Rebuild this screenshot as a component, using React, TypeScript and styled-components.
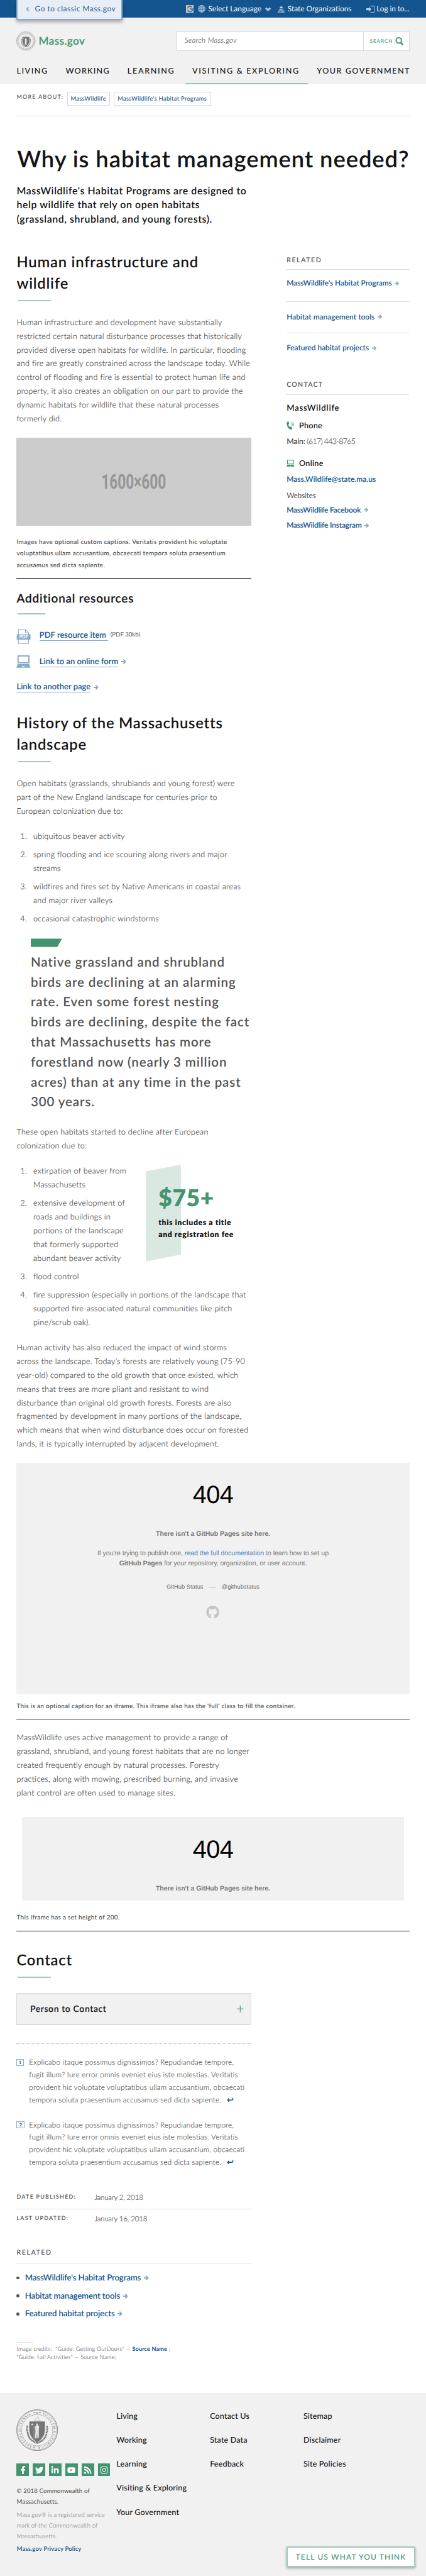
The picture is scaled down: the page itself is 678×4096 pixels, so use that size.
import React from 'react';
import styled, { createGlobalStyle, css } from 'styled-components';
import { FaFacebookF, FaGithub, FaInstagram, FaLinkedinIn, FaRss, FaTwitter, FaYoutube } from 'react-icons/fa';

/* ---------- design tokens ---------- */

const u = (n: number) => `${+(n * 0.66211).toFixed(3)}px`;

const c = {
  blue: '#14558f',
  blueSoft: '#89abcb',
  bluePale: '#cfdeea',
  green: '#43956f',
  greenSoft: '#a1cab7',
  ink: '#141414',
  text: '#535353',
  light: '#424242',
  line: '#dcdcdc',
  panel: '#f1f1f1',
};

/* size, line height, weight, tracking in thousandths of an em */
const type = (size: number, lh: number, weight: number, track = 0) => css`
  font-size: ${u(size)};
  line-height: ${u(lh)};
  font-weight: ${weight};
  letter-spacing: ${track / 1000}em;
`;

/* thickens the light and regular cuts by a hair */
const firm = (em: number) => css`
  -webkit-text-stroke: ${em}em currentColor;
`;

type Gap = { $mt?: number };
const gap = css<Gap>`
  margin-top: ${p => u(p.$mt ?? 0)};
`;

const GlobalStyle = createGlobalStyle`
  *, *::before, *::after { box-sizing: border-box; }
  body {
    margin: 0;
    background: #fff;
    color: ${c.text};
    font-family: Lato, "Open Sans", sans-serif;
    text-rendering: geometricPrecision;
  }
  h1, h2, h3, p, ol, ul, figure { margin: 0; padding: 0; }
  ol, ul { list-style: none; }
  a { color: inherit; text-decoration: none; }
  svg { display: block; flex: none; }
`;

const Page = styled.div`
  position: relative;
  display: flex;
  flex-direction: column;
  width: 678px;
  height: 4096px;
  overflow: hidden;
`;

/* ---------- header ---------- */

const TopBar = styled.div`
  display: flex;
  align-items: flex-start;
  height: ${u(43)};
  padding: 0 ${u(40)};
  background: ${c.blue};
  color: #fff;
`;

const ClassicTab = styled.a`
  position: relative;
  z-index: 1;
  display: flex;
  align-items: center;
  gap: ${u(13)};
  width: ${u(254)};
  height: ${u(49)};
  padding: 0 ${u(14)} ${u(3)} ${u(19)};
  background: #e8eef5;
  border: solid ${c.blueSoft};
  border-width: 0 2px 2px;
  box-shadow: 0 ${u(4)} ${u(8)} rgba(0, 0, 0, 0.3);
  color: ${c.blue};
  ${type(18, 43, 400, 42)}
  white-space: nowrap;
`;

const Utilities = styled.div`
  display: flex;
  margin-left: auto;
  height: 100%;
`;

const Utility = styled.a<{ $gap: number; $ml?: number; $track?: number }>`
  display: flex;
  align-items: center;
  gap: ${p => u(p.$gap)};
  margin-left: ${p => u(p.$ml ?? 0)};
  white-space: nowrap;
  ${type(18, 43, 400, 0)}
  letter-spacing: ${p => (p.$track ?? 0) / 1000}em;
`;

const Masthead = styled.header`
  display: flex;
  flex-direction: column;
  height: ${u(159)};
  padding: ${u(33)} ${u(40)} 0;
  background: ${c.panel};
`;

const BrandRow = styled.div`
  display: flex;
  justify-content: space-between;
  height: ${u(46)};
`;

const Brand = styled.a`
  display: flex;
  align-items: center;
  gap: ${u(7)};
  color: ${c.green};
  ${type(26, 46, 500, 22)}
  ${firm(0.014)}
`;

const SearchBox = styled.div`
  display: flex;
  width: ${u(560)};
  border: 1px solid ${c.line};
  background: #fff;
`;

const SearchField = styled.div`
  flex: 1;
  padding-left: ${u(18)};
  font-style: italic;
  ${type(17.5, 43, 300, 30)}
  ${firm(0.012)}
`;

const SearchButton = styled.div`
  display: flex;
  align-items: center;
  gap: ${u(5)};
  width: ${u(109)};
  padding-left: ${u(14)};
  border-left: 1px solid ${c.line};
  color: ${c.green};
  ${type(12, 43, 500, 130)}
`;

const MainNav = styled.nav`
  display: flex;
  justify-content: space-between;
  margin-top: ${u(37.2)};
  color: ${c.ink};
`;

const NavItem = styled.a<{ $active?: boolean; $track: number }>`
  position: relative;
  height: ${u(42.8)};
  ${type(19, 24, 500)}
  letter-spacing: ${p => p.$track / 1000}em;
  margin-right: -${p => p.$track / 1000}em;
  white-space: nowrap;
  ${p => p.$active && css`
    &::after {
      content: '';
      position: absolute;
      left: ${u(-17)};
      right: ${u(-20)};
      bottom: 0;
      height: 2px;
      background: #9bc5b0;
      transform: skewX(-18deg);
    }
  `}
`;

/* ---------- page head ---------- */

const Content = styled.main`
  padding: 0 ${u(40)};
`;

const MoreAbout = styled.div`
  display: flex;
  align-items: flex-start;
  height: ${u(77)};
  padding-top: ${u(19)};
  border-bottom: 1px solid ${c.line};
`;

const MoreLabel = styled.span`
  width: ${u(121)};
  margin-top: ${u(4)};
  ${type(13.5, 16, 500, 140)}
  white-space: nowrap;
`;

const Tag = styled.a<{ $w: number }>`
  width: ${p => u(p.$w)};
  height: ${u(32)};
  margin-right: ${u(9)};
  border: 1px solid ${c.bluePale};
  color: ${c.blue};
  text-align: center;
  ${type(14, 30, 500, 36)}
  white-space: nowrap;
`;

const Title = styled.h1`
  margin-top: ${u(69.2)};
  margin-left: ${u(1)};
  color: ${c.ink};
  ${type(55, 66, 600, 25)}
  white-space: nowrap;
`;

const Lead = styled.p`
  margin-top: ${u(28)};
  color: ${c.ink};
  ${type(24, 34.2, 600, 37)}
`;

const Columns = styled.div`
  display: grid;
  grid-template-columns: ${u(564)} ${u(295)};
  column-gap: ${u(85)};
`;

const Article = styled.article`
  white-space: nowrap;
`;

/* ---------- article parts ---------- */

const Rule = styled.span<{ $w: number; $mt: number }>`
  display: block;
  width: ${p => u(p.$w)};
  height: ${u(3)};
  margin: ${p => u(p.$mt)} 0 0 ${u(2)};
  background: ${c.greenSoft};
  transform: skewX(-20deg);
`;

const SectionTitle = styled.h2<Gap>`
  ${gap}
  color: ${c.ink};
  ${type(36, 52, 600, 32)}
`;

const SubTitle = styled.h3`
  margin-top: ${u(28)};
  color: ${c.ink};
  ${type(28.5, 40, 500, 46)}
  ${firm(0.018)}
`;

const Para = styled.p<Gap>`
  ${gap}
  color: ${c.light};
  ${type(19, 33, 300, 21)}
  ${firm(0.012)}
`;

const Placeholder = styled.div`
  display: flex;
  align-items: center;
  justify-content: center;
  height: ${u(212)};
  margin-top: ${u(29)};
  background: #ccc;
  color: #969696;
  font-family: Roboto, sans-serif;
  ${type(49, 212, 700)}
`;

const Narrow = styled.span`
  transform: scaleX(0.7);
`;

const Caption = styled.p<Gap>`
  ${gap}
  padding-bottom: ${u(16.8)};
  border-bottom: 1px solid ${c.ink};
  ${type(15, 28, 500, 36)}
  ${firm(0.008)}
`;

const Resource = styled.div<{ $mt: number; $h: number }>`
  display: flex;
  align-items: flex-start;
  height: ${p => u(p.$h)};
  margin-top: ${p => u(p.$mt)};
  color: ${c.blue};
  ${type(19.5, 24, 500, 4)}
  ${firm(0.014)}
`;

const Underlined = styled.a<Gap & { $ml?: number; $pr?: number }>`
  ${gap}
  margin-left: ${p => u(p.$ml ?? 0)};
  padding-right: ${p => u(p.$pr ?? 0)};
  height: ${u(26)};
  border-bottom: 1px solid ${c.blueSoft};
`;

const FileInfo = styled.span`
  margin: ${u(3.5)} 0 0 ${u(5)};
  color: ${c.text};
  ${type(14.5, 24, 400, 5)}
  ${firm(0)}
`;

const ArrowSlot = styled.span<Gap>`
  ${gap}
  display: inline-flex;
  margin-left: ${u(7)};
`;

const Steps = styled.ol<Gap>`
  ${gap}
  display: flow-root;
  counter-reset: step;
`;

const Step = styled.li`
  counter-increment: step;
  padding-left: ${u(40)};
  color: ${c.light};
  ${type(19, 33, 300, 21)}
  ${firm(0.012)}
  & + & { margin-top: ${u(11)}; }
  &::before {
    content: counter(step) '.';
    float: left;
    width: ${u(25)};
    margin-left: ${u(-40)};
    text-align: right;
  }
`;

const QuoteMark = styled.div`
  width: ${u(75)};
  height: ${u(20)};
  margin: ${u(31)} 0 0 ${u(34)};
  background: ${c.green};
  clip-path: polygon(0 0, 100% 0, 85% 100%, 0 100%);
`;

const Quote = styled.blockquote`
  margin: ${u(14)} 0 0 ${u(34)};
  ${type(31, 48, 600, 43)}
`;

const Stat = styled.aside`
  float: right;
  position: relative;
  width: ${u(254)};
  height: ${u(233)};
  margin-top: ${u(0.8)};
  padding: ${u(57)} 0 0 ${u(31)};
  color: ${c.ink};
  ${type(18.5, 29, 800, 50)}
  &::before {
    content: '';
    position: absolute;
    z-index: -1;
    inset: 0 auto 0 0;
    width: ${u(85)};
    background: #d9e9e1;
    clip-path: polygon(0 7%, 100% 0, 100% 92.7%, 0 100%);
  }
`;

const StatValue = styled.div`
  color: ${c.green};
  ${type(56, 46, 800, 18)}
  margin-bottom: ${u(21)};
`;

/* ---------- embedded 404 panel ---------- */

const Frame = styled.div<{ $mt: number; $ml?: number; $w: number; $h: number }>`
  display: flex;
  flex-direction: column;
  align-items: center;
  width: ${p => u(p.$w)};
  height: ${p => u(p.$h)};
  margin: ${p => u(p.$mt)} 0 0 ${p => u(p.$ml ?? 0)};
  padding-top: ${u(49)};
  overflow: hidden;
  background: ${c.panel};
  color: #787878;
  font-family: "Liberation Sans", Arial, sans-serif;
  text-align: center;
`;

const Code = styled.div`
  color: #000;
  text-shadow: 0 1px 0 #fff;
  ${type(60, 60, 400, -17)}
`;

const FrameLead = styled.div`
  margin-top: ${u(52)};
  ${type(16, 24, 700, -4)}
`;

const FrameText = styled.div`
  margin-top: ${u(21)};
  ${type(16, 24.6, 400, -5)}
  a { color: #4183c4; }
`;

const StatusLinks = styled.div`
  display: flex;
  align-items: center;
  gap: ${u(14)};
  margin: ${u(34.5)} 0 ${u(33.5)};
  color: #666;
  ${type(14, 20, 400, 8)}
  i { width: ${u(16)}; border-top: 1px solid #ccc; }
`;

const WideCaption = styled(Caption)`
  width: ${u(944)};
  letter-spacing: 0.033em;
`;

/* ---------- contact, footnotes, dates ---------- */

const Accordion = styled.div`
  display: flex;
  align-items: center;
  justify-content: space-between;
  height: ${u(77)};
  margin-top: ${u(36.3)};
  padding: 0 ${u(17)} 0 ${u(31)};
  background: ${c.panel};
  border: 1px solid ${c.line};
  border-block-width: 2px;
  color: ${c.ink};
  ${type(21, 24, 500, 47)}
  ${firm(0.014)}
`;

const Footnotes = styled.div`
  margin-top: ${u(45)};
  border-top: 1px dotted #b8b8b8;
`;

const Footnote = styled.div`
  display: flex;
  margin-top: ${u(30)};
  color: ${c.light};
  ${type(17.5, 30, 300, 22)}
  ${firm(0.01)}
`;

const NoteMark = styled.a<{ $w: number }>`
  width: ${p => u(p.$w)};
  height: ${u(17)};
  margin: ${u(5.4)} ${p => u(30 - p.$w)} 0 0;
  border: 1px solid ${c.blueSoft};
  color: ${c.blue};
  text-align: center;
  ${type(11, 14, 600)}
`;

const BackLink = styled.a`
  display: inline-block;
  margin-left: ${u(8)};
`;

const DateRow = styled.div<{ $mt?: number; $pt?: number; $line?: boolean }>`
  display: flex;
  align-items: flex-start;
  margin-top: ${p => u(p.$mt ?? 0)};
  padding-top: ${p => u(p.$pt ?? 0)};
  ${p => p.$line && css`height: ${u(38.6)}; border-bottom: 1px solid ${c.line};`}
`;

const DateLabel = styled.span`
  width: ${u(187)};
  padding-top: ${u(1.2)};
  ${type(13.5, 16, 600, 141)}
`;

const DateValue = styled.span`
  color: ${c.light};
  ${type(17.5, 24, 300, -18)}
  ${firm(0.01)}
`;

const ListHeading = styled.h3<{ $mt: number; $pb: number; $track?: number }>`
  margin-top: ${p => u(p.$mt)};
  padding-bottom: ${p => u(p.$pb)};
  border-bottom: 1px solid ${c.line};
  ${type(16, 20, 500)}
  letter-spacing: ${p => (p.$track ?? 150) / 1000}em;
  ${firm(0.01)}
`;

const Bullets = styled.ul`
  margin-top: ${u(23.3)};
`;

const Bullet = styled.li`
  display: flex;
  align-items: center;
  color: ${c.blue};
  ${type(20, 24, 600, -11)}
  & + & { margin-top: ${u(19.3)}; }
  &::before {
    content: '';
    width: ${u(7)};
    height: ${u(7)};
    margin-right: ${u(13)};
    border-radius: 50%;
    background: ${c.text};
  }
`;

const Credits = styled.div`
  margin-top: ${u(55)};
  padding-bottom: ${u(76.2)};
  color: #585858;
  ${type(13.5, 20, 300, 28)}
  ${firm(0.01)}
  &::before {
    content: '';
    display: block;
    width: ${u(40)};
    margin-bottom: ${u(4.8)};
    border-top: 1px solid ${c.line};
  }
  b { color: ${c.blue}; font-weight: 700; }
`;

const CreditLine = styled.div`
  white-space: pre;
`;

/* ---------- sidebar ---------- */

const Sidebar = styled.aside`
  white-space: nowrap;
`;

const SideLink = styled.a<{ $mt?: number; $pt?: number; $pb?: number; $track?: number; $weight?: number }>`
  display: flex;
  align-items: center;
  margin-top: ${p => u(p.$mt ?? 0)};
  padding-top: ${p => u(p.$pt ?? 0)};
  padding-bottom: ${p => u(p.$pb ?? 0)};
  border-bottom: ${p => (p.$pb ? `1px solid ${c.line}` : '0')};
  color: ${c.blue};
  ${type(18, 22, 600)}
  font-weight: ${p => p.$weight ?? 600};
  letter-spacing: ${p => (p.$track ?? -7) / 1000}em;
  ${p => p.$weight && firm(0.014)}
`;

const OrgName = styled.div`
  margin-top: ${u(19.8)};
  color: ${c.ink};
  ${type(20, 24, 600, 55)}
`;

const ContactKind = styled.div<Gap>`
  ${gap}
  display: flex;
  align-items: center;
  gap: ${u(11)};
  color: ${c.ink};
  ${type(19, 24, 600, 22)}
`;

const PhoneLine = styled.div`
  margin-top: ${u(13.2)};
  color: ${c.light};
  ${type(18.5, 24, 300, -48)}
  ${firm(0.01)}
  span { font-weight: 400; letter-spacing: -0.01em; }
`;

const SideNote = styled.div`
  margin-top: ${u(18)};
  ${type(18, 22, 400, -22)}
`;

/* ---------- footer ---------- */

const Footer = styled.footer`
  flex: 1;
  display: flex;
  padding: 0 ${u(40)};
  background: ${c.panel};
  white-space: nowrap;
`;

const FooterBrand = styled.div`
  width: ${u(240)};
  padding-top: ${u(40)};
`;

const SocialRow = styled.div`
  display: flex;
  gap: ${u(9)};
  margin-top: ${u(30)};
`;

const SocialButton = styled.a`
  display: flex;
  align-items: center;
  justify-content: center;
  width: ${u(30)};
  height: ${u(30)};
  background: ${c.green};
  color: #fff;
  font-size: ${u(20)};
`;

const Legal = styled.p<{ $mt: number; $weight: number; $color: string; $track: number }>`
  margin-top: ${p => u(p.$mt)};
  color: ${p => p.$color};
  ${type(14.5, 26, 400)}
  font-weight: ${p => p.$weight};
  letter-spacing: ${p => p.$track / 1000}em;
`;

const FooterLinks = styled.div`
  display: flex;
  flex-direction: column;
  gap: ${u(33.8)};
  width: ${u(224.7)};
  padding-top: ${u(43.6)};
  color: ${c.ink};
  ${type(19, 24, 500, 12)}
`;

const FeedbackButton = styled.a`
  position: absolute;
  right: ${u(25)};
  bottom: ${u(21)};
  width: ${u(311)};
  height: ${u(50)};
  border: 2px solid ${c.greenSoft};
  background: #fff;
  box-shadow: 0 ${u(3)} ${u(6)} rgba(0, 0, 0, 0.3);
  color: ${c.green};
  text-align: center;
  white-space: nowrap;
  ${type(18, 44.5, 500, 100)}
`;

/* ---------- icons ---------- */

const px = (n: number) => n * 0.66211;

const Arrow = ({ size = 11 }: { size?: number }) => (
  <svg width={px(size)} height={px(size)} viewBox="0 0 12 12" fill="none" stroke={c.blueSoft} strokeWidth="2.8">
    <path d="M0 6h9M5 1l5 5-5 5" />
  </svg>
);

const GoogleG = () => (
  <svg width={px(19)} height={px(19)} viewBox="0 0 19 19" fill="none" strokeWidth="3.2">
    <rect width="19" height="19" fill="#b9cce0" />
    <path d="M4 6.2A6.6 6.6 0 0 1 14.2 4.9" stroke="#b5435a" />
    <path d="M3.8 12.6A6.6 6.6 0 0 1 4 6.2" stroke="#d9b03c" />
    <path d="M14 14.3A6.6 6.6 0 0 1 3.8 12.6" stroke="#3f9a6a" />
    <path d="M9.6 9.7h6.3A6.6 6.6 0 0 1 14 14.3" stroke="#4079cf" />
  </svg>
);

const Globe = () => (
  <svg width={px(18)} height={px(18)} viewBox="0 0 18 18" fill="none" stroke="#b9cce0" strokeWidth="1.4">
    <circle cx="9" cy="9" r="8.2" />
    <ellipse cx="9" cy="9" rx="4.2" ry="8.2" />
    <path d="M9 1v16M1 9h16M2 5h14M2 13h14" />
  </svg>
);

const ChevronDown = () => (
  <svg width={px(14)} height={px(11)} viewBox="0 0 14 11" fill="none" stroke="#b9cce0" strokeWidth="4">
    <path d="M1.5 2.3 7 7.8l5.5-5.5" />
  </svg>
);

const StateHouse = () => (
  <svg width={px(17)} height={px(17)} viewBox="0 0 17 17" fill="#b9cce0">
    <path d="M8 0h1v2c2 .5 3.500 2 3.500 4h-8c0-2 1.500-3.500 3.500-4zM4 7h9v2H4z" />
    <path d="M3 9.700h2v2H3zM6 9.700h2v2H6zM9 9.700h2v2H9zM12 9.700h2v2h-2z" />
    <path d="M1 12h15v1H1zM1 13h1.500v2.500H1zM4.300 13h1.500v2.500H4.300zM7.700 13h1.500v2.500H7.700zM11 13h1.500v2.500H11zM14.500 13H16v2.500h-1.500zM0 15.500h17V17H0z" />
  </svg>
);

const Login = () => (
  <svg width={px(20)} height={px(17)} viewBox="0 0 20 17">
    <path d="M0 6h6V2.500l6.500 6-6.500 6V11H0z" fill="#b9cce0" />
    <path d="M10 1h9v15h-9" fill="none" stroke="#b9cce0" strokeWidth="1.600" />
  </svg>
);

const ChevronLeft = () => (
  <svg width={px(9)} height={px(11)} viewBox="0 0 9 11" fill="none" stroke={c.blueSoft} strokeWidth="3.400">
    <path d="M7 1 2.500 5.500 7 10" />
  </svg>
);

const SearchIcon = () => (
  <svg width={px(20)} height={px(20)} viewBox="0 0 20 20" fill="none" stroke={c.green}>
    <circle cx="8.500" cy="8" r="6.500" strokeWidth="3" />
    <path d="m13 13 6 6" strokeWidth="4" />
  </svg>
);

const PdfIcon = () => (
  <svg width={px(34)} height={px(36)} viewBox="0 0 34 36">
    <path d="M5 1h17l7.500 8v26H5zM22 1v8.500h7.500" fill="#fff" stroke={c.blueSoft} strokeWidth="1.600" />
    <rect x="1" y="13" width="33" height="13" fill={c.blueSoft} />
    <text x="17.500" y="23.400" textAnchor="middle" fontFamily="Lato" fontSize="11" fontWeight="900" fill="#fff" style={{ WebkitTextStroke: 0 }}>PDF</text>
  </svg>
);

const Laptop = ({ w, h, color }: { w: number; h: number; color: string }) => (
  <svg width={px(w)} height={px(h)} viewBox="0 0 34 30" preserveAspectRatio="none">
    <rect x="4.200" y="1.500" width="26" height="16.500" fill="none" stroke={color} strokeWidth="3" />
    <path d="M3 21h28l3 9H0z" fill={color} />
    <rect x="14" y="26" width="6" height="2" fill="#fff" />
  </svg>
);

const PhoneIcon = () => (
  <svg width={px(19)} height={px(20)} viewBox="0 0 19 20">
    <path d="M1 2C2 .5 4 0 5 .5L6.500 5 4.500 7c.5 2.500 2 5 4 6.500l2.500-1 3 4c0 1.500-2 3-4 3.300C4 18.500-1 9 1 2z" fill={c.green} />
    <path d="M11 7c1 .5 1.600 1.500 1.600 3M11.500 4c2 .8 3.500 3 3.500 6M12 1.200c3.500 1.200 5.800 4.500 5.800 8.800" fill="none" stroke={c.green} strokeWidth="1.300" />
  </svg>
);

const ReturnArrow = () => (
  <svg width={px(16)} height={px(12)} viewBox="0 0 16 12" fill="none" stroke={c.blue} strokeWidth="2.300">
    <path d="M5.500 2.500 2 6.500l3.500 4M2 6.500h10q2.500 0 2.500-2.500V1" />
  </svg>
);

const Plus = () => (
  <svg width={px(16)} height={px(16)} viewBox="0 0 16 16" stroke={c.green} strokeWidth="1.700">
    <path d="M8 0v16M0 8h16" />
  </svg>
);

const Seal = ({ size, lettered }: { size: number; lettered?: boolean }) => (
  <svg width={px(size)} height={px(size)} viewBox="0 0 100 100" fill="none" stroke="#757575">
    <circle cx="50" cy="50" r="49.200" strokeWidth="1.200" />
    <circle cx="50" cy="50" r="47.200" strokeWidth="0.700" />
    <circle cx="50" cy="50" r="37.500" strokeWidth="1.300" strokeDasharray="1.300 1" />
    {lettered ? (
      <>
        <path id="seal-ring" d="M50 10.500a39.500 39.500 0 1 1-.01 0" stroke="none" />
        <text fontFamily="Liberation Serif" fontSize="8" fill="#757575" stroke="none">
          <textPath href="#seal-ring" startOffset="13" textLength="222">SIGILLUM REIPUBLICÆ MASSACHUSETTENSIS.</textPath>
        </text>
        <path d="M41 8.500h5m8 0h5" strokeWidth="1.500" />
        <circle cx="50" cy="8.500" r="2" />
      </>
    ) : (
      <circle cx="50" cy="50" r="42.300" strokeWidth="5" strokeDasharray="3 2.500" opacity="0.55" />
    )}
    <path d="M27 39c-3 9 0 14 1 21 2 9 9 17 22 21 13-4 20-12 22-21 1-7 4-12 1-21" strokeWidth="4" strokeDasharray="3 .8" />
    <path d="M43 26c4-3 6-9 9-8 3 2-1 3 5 7M43 27h16" strokeWidth="1" opacity="0.6" />
    <path d="M31.500 29h37c1 17 1 28-4 36-4 7-9 11-14.500 14-5.500-3-10.500-7-14.500-14-5-8-5-19-4-36z" fill="#757575" stroke="none" />
    <path d="m38 33 .9 2 2.200.2-1.700 1.400.6 2.200-2-1.200-2 1.200.6-2.200-1.700-1.400 2.200-.2z" fill="#f1f1f1" stroke="none" />
    <path d="M48 34h4v4l3 3-1 9v19h-3.500l-.5-12-1.500 13H45l1-19-1-9 3-4z" fill="#e4e4e4" stroke="none" />
    <path d="M42.500 39v30" stroke="#d0d0d0" strokeWidth="0.900" />
  </svg>
);

/* ---------- composed pieces ---------- */

const Link = ({ children, ...rest }: React.ComponentProps<typeof SideLink>) => (
  <SideLink {...rest}>{children}<ArrowSlot><Arrow /></ArrowSlot></SideLink>
);

const relatedLinks = ["MassWildlife's Habitat Programs", 'Habitat management tools', 'Featured habitat projects'];

const footerColumns = [
  ['Living', 'Working', 'Learning', 'Visiting & Exploring', 'Your Government'],
  ['Contact Us', 'State Data', 'Feedback'],
  ['Sitemap', 'Disclaimer', 'Site Policies'],
];

const socials = [FaFacebookF, FaTwitter, FaLinkedinIn, FaYoutube, FaRss, FaInstagram];

const NotFound = () => (
  <>
    <Code>404</Code>
    <FrameLead>There isn't a GitHub Pages site here.</FrameLead>
  </>
);

const NoteText = () => (
  <span>
    Explicabo itaque possimus dignissimos? Repudiandae tempore,<br />
    fugit illum? Iure error omnis eveniet eius iste molestias. Veritatis<br />
    provident hic voluptate voluptatibus ullam accusantium, obcaecati<br />
    tempora soluta praesentium accusamus sed dicta sapiente. <BackLink><ReturnArrow /></BackLink>
  </span>
);

export default function App() {
  return (
    <Page>
      <GlobalStyle />
      <TopBar>
        <ClassicTab><ChevronLeft />Go to classic Mass.gov</ClassicTab>
        <Utilities>
          <Utility $gap={10}><GoogleG /><Globe /></Utility>
          <Utility $gap={9} $ml={7}>Select Language <ChevronDown /></Utility>
          <Utility $gap={7} $ml={16} $track={-1}><StateHouse />State Organizations</Utility>
          <Utility $gap={5} $ml={35} $track={-9}><Login />Log in to...</Utility>
        </Utilities>
      </TopBar>
      <Masthead>
        <BrandRow>
          <Brand><Seal size={46} />Mass.gov</Brand>
          <SearchBox>
            <SearchField>Search Mass.gov</SearchField>
            <SearchButton>SEARCH<SearchIcon /></SearchButton>
          </SearchBox>
        </BrandRow>
        <MainNav>
          <NavItem $track={123}>LIVING</NavItem>
          <NavItem $track={98}>WORKING</NavItem>
          <NavItem $track={133}>LEARNING</NavItem>
          <NavItem $track={133} $active>VISITING &amp; EXPLORING</NavItem>
          <NavItem $track={118}>YOUR GOVERNMENT</NavItem>
        </MainNav>
      </Masthead>

      <Content>
        <MoreAbout>
          <MoreLabel>MORE ABOUT:</MoreLabel>
          <Tag $w={103}>MassWildlife</Tag>
          <Tag $w={234}>MassWildlife's Habitat Programs</Tag>
        </MoreAbout>
        <Title>Why is habitat management needed?</Title>
        <Lead>
          MassWildlife's Habitat Programs are designed to<br />
          help wildlife that rely on open habitats<br />
          (grassland, shrubland, and young forests).
        </Lead>

        <Columns>
          <Article>
            <SectionTitle $mt={59.3}>Human infrastructure and<br />wildlife</SectionTitle>
            <Rule $w={80} $mt={13} />
            <Para $mt={34}>
              Human infrastructure and development have substantially<br />
              restricted certain natural disturbance processes that historically<br />
              provided diverse open habitats for wildlife. In particular, flooding<br />
              and fire are greatly constrained across the landscape today. While<br />
              control of flooding and fire is essential to protect human life and<br />
              property, it also creates an obligation on our part to provide the<br />
              dynamic habitats for wildlife that these natural processes<br />
              formerly did.
            </Para>
            <Placeholder><Narrow>1600×600</Narrow></Placeholder>
            <Caption $mt={25}>
              Images have optional custom captions. Veritatis provident hic voluptate<br />
              voluptatibus ullam accusantium, obcaecati tempora soluta praesentium<br />
              accusamus sed dicta sapiente.
            </Caption>

            <SubTitle>Additional resources</SubTitle>
            <Rule $w={66} $mt={14} />
            <Resource $mt={35} $h={36}>
              <PdfIcon />
              <Underlined $mt={3.5} $ml={21} $pr={5}>PDF resource item</Underlined>
              <FileInfo>(PDF 30kb)</FileInfo>
            </Resource>
            <Resource $mt={28} $h={30}>
              <Laptop w={34} h={30} color={c.blueSoft} />
              <Underlined $mt={2.5} $ml={21}>Link to an online form</Underlined>
              <ArrowSlot $mt={9}><Arrow size={12} /></ArrowSlot>
            </Resource>
            <Resource $mt={33.5} $h={26}>
              <Underlined>Link to another page</Underlined>
              <ArrowSlot $mt={7}><Arrow size={12} /></ArrowSlot>
            </Resource>

            <SectionTitle $mt={47.6}>History of the Massachusetts<br />landscape</SectionTitle>
            <Rule $w={80} $mt={13} />
            <Para $mt={34}>
              Open habitats (grasslands, shrublands and young forest) were<br />
              part of the New England landscape for centuries prior to<br />
              European colonization due to:
            </Para>
            <Steps $mt={28}>
              <Step>ubiquitous beaver activity</Step>
              <Step>spring flooding and ice scouring along rivers and major<br />streams</Step>
              <Step>wildfires and fires set by Native Americans in coastal areas<br />and major river valleys</Step>
              <Step>occasional catastrophic windstorms</Step>
            </Steps>
            <QuoteMark />
            <Quote>
              Native grassland and shrubland<br />
              birds are declining at an alarming<br />
              rate. Even some forest nesting<br />
              birds are declining, despite the fact<br />
              that Massachusetts has more<br />
              forestland now (nearly 3 million<br />
              acres) than at any time in the past<br />
              300 years.
            </Quote>
            <Para $mt={30}>
              These open habitats started to decline after European<br />
              colonization due to:
            </Para>
            <Steps $mt={28}>
              <Stat>
                <StatValue>$75+</StatValue>
                this includes a title<br />and registration fee
              </Stat>
              <Step>extirpation of beaver from<br />Massachusetts</Step>
              <Step>extensive development of<br />roads and buildings in<br />portions of the landscape<br />that formerly supported<br />abundant beaver activity</Step>
              <Step>flood control</Step>
              <Step>fire suppression (especially in portions of the landscape that<br />supported fire-associated natural communities like pitch<br />pine/scrub oak).</Step>
            </Steps>
            <Para $mt={28.5}>
              Human activity has also reduced the impact of wind storms<br />
              across the landscape. Today’s forests are relatively young (75-90<br />
              year-old) compared to the old growth that once existed, which<br />
              means that trees are more pliant and resistant to wind<br />
              disturbance than original old growth forests. Forests are also<br />
              fragmented by development in many portions of the landscape,<br />
              which means that when wind disturbance does occur on forested<br />
              lands, it is typically interrupted by adjacent development.
            </Para>

            <Frame $mt={28.3} $w={944} $h={556}>
              <NotFound />
              <FrameText>
                If you're trying to publish one, <a>read the full documentation</a> to learn how to set up<br />
                <b>GitHub Pages</b> for your repository, organization, or user account.
              </FrameText>
              <StatusLinks><span>GitHub Status</span><i /><span>@githubstatus</span></StatusLinks>
              <FaGithub size={px(32)} color="#c3c4c4" />
            </Frame>
            <WideCaption $mt={15}>
              This is an optional caption for an iframe. This iframe also has the 'full' class to fill the container.
            </WideCaption>

            <Para $mt={27}>
              MassWildlife uses active management to provide a range of<br />
              grassland, shrubland, and young forest habitats that are no longer<br />
              created frequently enough by natural processes. Forestry<br />
              practices, along with mowing, prescribed burning, and invasive<br />
              plant control are often used to manage sites.
            </Para>
            <Frame $mt={41.8} $ml={13} $w={918} $h={200}><NotFound /></Frame>
            <WideCaption $mt={28}>This iframe has a set height of 200.</WideCaption>

            <SectionTitle $mt={43.7}>Contact</SectionTitle>
            <Rule $w={80} $mt={13} />
            <Accordion>Person to Contact<Plus /></Accordion>

            <Footnotes>
              <Footnote><NoteMark $w={17}>1</NoteMark><NoteText /></Footnote>
              <Footnote><NoteMark $w={19}>2</NoteMark><NoteText /></Footnote>
            </Footnotes>

            <DateRow $mt={58} $line><DateLabel>DATE PUBLISHED:</DateLabel><DateValue>January 2, 2018</DateValue></DateRow>
            <DateRow $pt={12}><DateLabel>LAST UPDATED:</DateLabel><DateValue>January 16, 2018</DateValue></DateRow>

            <ListHeading $mt={59.6} $pb={12.2}>RELATED</ListHeading>
            <Bullets>
              {relatedLinks.map(t => <Bullet key={t}>{t}<ArrowSlot><Arrow size={12} /></ArrowSlot></Bullet>)}
            </Bullets>
            <Credits>
              <CreditLine>{'Image credits:  "Guide: Getting OutDoors" — '}<b>Source Name</b>{' ;'}</CreditLine>
              <CreditLine>{'"Guide: Fall Activities" — Source Name;'}</CreditLine>
            </Credits>
          </Article>

          <Sidebar>
            <ListHeading $mt={71.5} $pb={10.7}>RELATED</ListHeading>
            <Link $mt={21} $pb={32}>{relatedLinks[0]}</Link>
            <Link $pt={25} $pb={27} $track={3}>{relatedLinks[1]}</Link>
            <Link $pt={25} $track={-3}>{relatedLinks[2]}</Link>
            <ListHeading $mt={67.8} $pb={11.2} $track={118}>CONTACT</ListHeading>
            <OrgName>MassWildlife</OrgName>
            <ContactKind $mt={18.8}><PhoneIcon />Phone</ContactKind>
            <PhoneLine><span>Main:</span> (617) 443-8765</PhoneLine>
            <ContactKind $mt={28.8}><Laptop w={19} h={17} color={c.green} />Online</ContactKind>
            <SideLink $mt={15.4} $weight={500} $track={9}>Mass.Wildlife@state.ma.us</SideLink>
            <SideNote>Websites</SideNote>
            <Link $mt={12} $weight={500} $track={-10}>MassWildlife Facebook</Link>
            <Link $mt={15} $weight={500} $track={-10}>MassWildlife Instagram</Link>
          </Sidebar>
        </Columns>
      </Content>

      <Footer>
        <FooterBrand>
          <Seal size={100} lettered />
          <SocialRow>
            {socials.map((Icon, i) => <SocialButton key={i}><Icon /></SocialButton>)}
          </SocialRow>
          <Legal $mt={24.4} $weight={500} $color={c.text} $track={16}>© 2018 Commonwealth of<br />Massachusetts.</Legal>
          <Legal $mt={5} $weight={300} $color="#666" $track={9}>Mass.gov® is a registered service<br />mark of the Commonwealth of<br />Massachusetts.</Legal>
          <Legal $mt={4} $weight={600} $color={c.blue} $track={12}>Mass.gov Privacy Policy</Legal>
        </FooterBrand>
        {footerColumns.map(links => (
          <FooterLinks key={links[0]}>{links.map(l => <a key={l}>{l}</a>)}</FooterLinks>
        ))}
      </Footer>
      <FeedbackButton>TELL US WHAT YOU THINK</FeedbackButton>
    </Page>
  );
}
